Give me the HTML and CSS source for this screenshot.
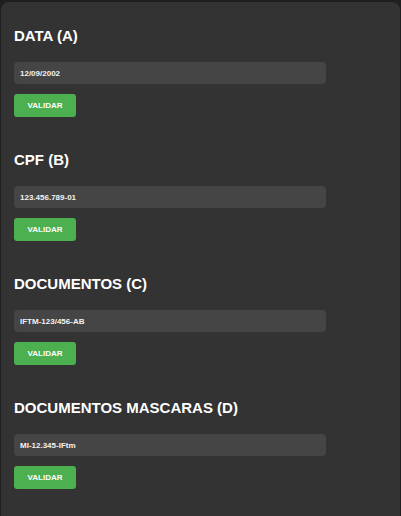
FILE: index.html
```html
<!DOCTYPE html>
<html lang="pt">
<head>
<meta charset="utf-8">
<title>Validação</title>
<link rel="stylesheet" href="styles.css">
</head>
<body>
<main class="card">
  <section class="block">
    <h2 class="title">DATA (A)</h2>
    <input class="field" type="text" value="12/09/2002">
    <button class="btn">VALIDAR</button>
  </section>
  <section class="block">
    <h2 class="title">CPF (B)</h2>
    <input class="field" type="text" value="123.456.789-01">
    <button class="btn">VALIDAR</button>
  </section>
  <section class="block">
    <h2 class="title">DOCUMENTOS (C)</h2>
    <input class="field" type="text" value="IFTM-123/456-AB">
    <button class="btn">VALIDAR</button>
  </section>
  <section class="block">
    <h2 class="title">DOCUMENTOS MASCARAS (D)</h2>
    <input class="field" type="text" value="MI-12.345-IFtm">
    <button class="btn">VALIDAR</button>
  </section>
</main>
</body>
</html>
```
FILE: styles.css
```css
html, body {
  margin: 0;
  padding: 0;
  background: #1f1f1f;
  font-family: "Liberation Sans", Arial, sans-serif;
}
.card {
  margin: 2px 1px 0 1px;
  background: #333333;
  border-radius: 8px 8px 0 0;
  padding: 25px 13px 40px;
  box-sizing: border-box;
}
.block {
  display: flex;
  flex-direction: column;
  align-items: flex-start;
  margin-bottom: 34px;
}
.block:last-child {
  margin-bottom: 0;
}
.title {
  margin: 0;
  color: #ffffff;
  font-size: 15px;
  line-height: 17px;
  font-weight: bold;
}
.field {
  margin-top: 18px;
  width: 312px;
  height: 22px;
  box-sizing: border-box;
  border: none;
  border-radius: 4px;
  background: #454545;
  color: #f2f2f2;
  font-family: "Liberation Sans", Arial, sans-serif;
  font-size: 8px;
  font-weight: bold;
  padding: 0 6px;
  outline: none;
}
.btn {
  margin-top: 10px;
  width: 62px;
  height: 23px;
  border: none;
  border-radius: 3px;
  background: #4caf50;
  color: #ffffff;
  font-family: "Liberation Sans", Arial, sans-serif;
  font-size: 8px;
  font-weight: bold;
  padding: 0;
  cursor: pointer;
}
```
